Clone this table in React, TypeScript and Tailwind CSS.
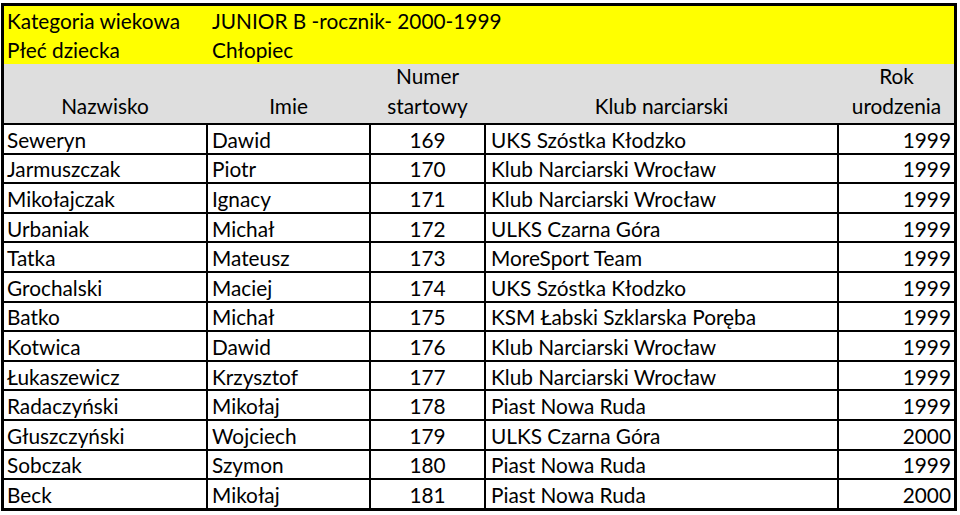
import React from "react";

const rows: [string, string, string, string, string][] = [
  ["Seweryn", "Dawid", "169", "UKS Szóstka Kłodzko", "1999"],
  ["Jarmuszczak", "Piotr", "170", "Klub Narciarski Wrocław", "1999"],
  ["Mikołajczak", "Ignacy", "171", "Klub Narciarski Wrocław", "1999"],
  ["Urbaniak", "Michał", "172", "ULKS Czarna Góra", "1999"],
  ["Tatka", "Mateusz", "173", "MoreSport Team", "1999"],
  ["Grochalski", "Maciej", "174", "UKS Szóstka Kłodzko", "1999"],
  ["Batko", "Michał", "175", "KSM Łabski Szklarska Poręba", "1999"],
  ["Kotwica", "Dawid", "176", "Klub Narciarski Wrocław", "1999"],
  ["Łukaszewicz", "Krzysztof", "177", "Klub Narciarski Wrocław", "1999"],
  ["Radaczyński", "Mikołaj", "178", "Piast Nowa Ruda", "1999"],
  ["Głuszczyński", "Wojciech", "179", "ULKS Czarna Góra", "2000"],
  ["Sobczak", "Szymon", "180", "Piast Nowa Ruda", "1999"],
  ["Beck", "Mikołaj", "181", "Piast Nowa Ruda", "2000"],
];

const cols = "grid grid-cols-[202px_161px_113px_351px_115px] gap-x-[2px]";

export default function App() {
  return (
    <div
      className="w-[960px] h-[515px] bg-white overflow-hidden pt-[3px] pl-[1px]"
      style={{ fontFamily: "Lato, 'Liberation Sans', sans-serif" }}
    >
      <div className="w-[956px] border-[3px] border-black text-[20.8px] leading-none text-black">
        {/* Yellow block */}
        <div className="bg-[#ffff00] h-[58px] flex flex-col">
          <div className={`${cols} h-[29px] items-center pt-[2px]`}>
            <div className="pl-[3px]">Kategoria wiekowa</div>
            <div className="col-span-4 pl-[4px]">JUNIOR B -rocznik- 2000-1999</div>
          </div>
          <div className={`${cols} h-[29px] items-center pt-[2px]`}>
            <div className="pl-[3px]">Płeć dziecka</div>
            <div className="col-span-4 pl-[4px]">Chłopiec</div>
          </div>
        </div>
        {/* Gray header */}
        <div className={`${cols} bg-[#dedede] h-[61px] border-b-2 border-black`}>
          <div className="flex items-end justify-center pb-[6px]">Nazwisko</div>
          <div className="flex items-end justify-center pb-[6px]">Imie</div>
          <div className="flex flex-col items-center justify-end pb-[6px] gap-[9px]">
            <span>Numer</span>
            <span>startowy</span>
          </div>
          <div className="flex items-end justify-center pb-[6px]">Klub narciarski</div>
          <div className="flex flex-col items-center justify-end pb-[6px] gap-[9px]">
            <span>Rok</span>
            <span>urodzenia</span>
          </div>
        </div>
        {/* Data */}
        <div className="grid grid-cols-[202px_161px_113px_351px_115px] auto-rows-[27.6px] gap-[2px] bg-black">
          {rows.map((r, i) => (
            <React.Fragment key={i}>
              <div className="bg-white flex items-center pl-[3px] pt-[3px]">{r[0]}</div>
              <div className="bg-white flex items-center pl-[4px] pt-[3px]">{r[1]}</div>
              <div className="bg-white flex items-center justify-center pt-[3px]">{r[2]}</div>
              <div className="bg-white flex items-center pl-[5px] pt-[3px]">{r[3]}</div>
              <div className="bg-white flex items-center justify-end pr-[3px] pt-[3px]">{r[4]}</div>
            </React.Fragment>
          ))}
        </div>
      </div>
    </div>
  );
}
